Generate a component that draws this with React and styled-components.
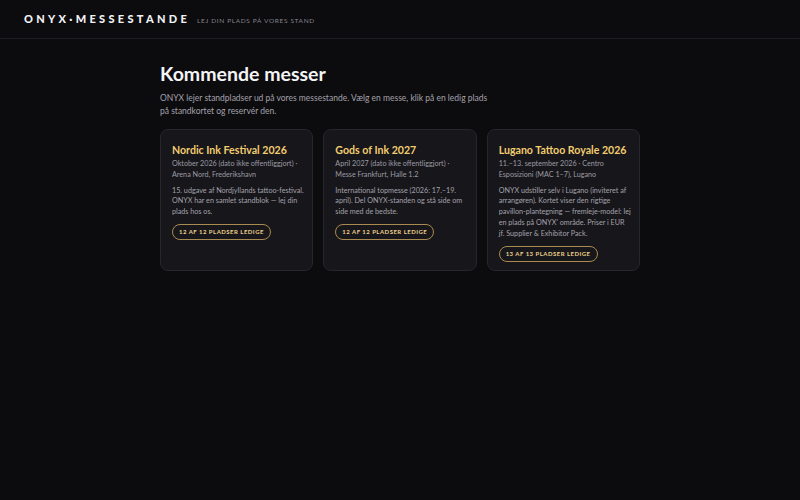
import React from "react";
import styled, { createGlobalStyle } from "styled-components";

const fairs = [
  {
    title: "Nordic Ink Festival 2026",
    meta: "Oktober 2026 (dato ikke offentliggjort) · Arena Nord, Frederikshavn",
    text: "15. udgave af Nordjyllands tattoo-festival. ONYX har en samlet standblok — lej din plads hos os.",
    free: 12,
    total: 12,
  },
  {
    title: "Gods of Ink 2027",
    meta: "April 2027 (dato ikke offentliggjort) · Messe Frankfurt, Halle 1.2",
    text: "International topmesse (2026: 17.–19. april). Del ONYX-standen og stå side om side med de bedste.",
    free: 12,
    total: 12,
  },
  {
    title: "Lugano Tattoo Royale 2026",
    meta: "11.–13. september 2026 · Centro Esposizioni (MAC 1–7), Lugano",
    text: "ONYX udstiller selv i Lugano (inviteret af arrangøren). Kortet viser den rigtige pavillon-plantegning — fremleje-model: lej en plads på ONYX' område. Priser i EUR jf. Supplier & Exhibitor Pack.",
    free: 13,
    total: 13,
  },
];

function App() {
  return (
    <>
      <GlobalStyle />
      <Header>
        <Logo>ONYX·MESSESTANDE</Logo>
        <Tagline>Lej din plads på vores stand</Tagline>
      </Header>
      <Main>
        <Title>Kommende messer</Title>
        <Intro>
          ONYX lejer standpladser ud på vores messestande. Vælg en messe, klik
          på en ledig plads på standkortet og reservér den.
        </Intro>
        <Grid>
          {fairs.map((f) => (
            <Card key={f.title}>
              <CardTitle>{f.title}</CardTitle>
              <Meta>{f.meta}</Meta>
              <Desc>{f.text}</Desc>
              <Badge>
                {f.free} af {f.total} pladser ledige
              </Badge>
            </Card>
          ))}
        </Grid>
      </Main>
    </>
  );
}

export default App;

const GlobalStyle = createGlobalStyle`
  html, body {
    margin: 0;
    background: #0c0b0e;
    color: #eeeef0;
    font-family: Lato, "Open Sans", sans-serif;
  }
  body {
    min-height: 500px;
  }
`;

const Header = styled.header`
  display: flex;
  align-items: baseline;
  gap: 7px;
  height: 39px;
  padding: 12px 24px 0;
  box-sizing: border-box;
  border-bottom: 1px solid #1e1d22;
`;

const Logo = styled.div`
  font-size: 11px;
  font-weight: 900;
  letter-spacing: 0.3em;
  color: #f1f1f3;
`;

const Tagline = styled.div`
  font-size: 6.5px;
  letter-spacing: 0.1em;
  text-transform: uppercase;
  color: #85848c;
`;

const Main = styled.main`
  width: 480px;
  margin: 0 auto;
  padding-top: 23px;
`;

const Title = styled.h1`
  margin: 0;
  font-size: 19.5px;
  font-weight: 700;
  color: #f4f4f6;
`;

const Intro = styled.p`
  max-width: 330px;
  margin: 7px 0 0;
  font-size: 8.5px;
  line-height: 13px;
  color: #a3a2aa;
`;

const Grid = styled.div`
  display: grid;
  grid-template-columns: repeat(3, 1fr);
  gap: 10px;
  margin-top: 11px;
`;

const Card = styled.div`
  display: flex;
  flex-direction: column;
  align-items: flex-start;
  padding: 14px 8px 8px 11px;
  background: #17161b;
  border: 1px solid #27262c;
  border-radius: 8px;
  min-height: 117px;
`;

const CardTitle = styled.h2`
  margin: 0;
  font-size: 10.6px;
  font-weight: 700;
  color: #f2cd70;
`;

const Meta = styled.div`
  margin-top: 3px;
  font-size: 7.2px;
  line-height: 10.8px;
  color: #9c9ba3;
`;

const Desc = styled.p`
  margin: 5px 0 0;
  font-size: 7.2px;
  line-height: 10.8px;
  color: #a3a2aa;
`;

const Badge = styled.span`
  margin-top: 6px;
  display: inline-flex;
  align-items: center;
  height: 14px;
  padding: 0 6px;
  border: 1px solid #a98a4f;
  border-radius: 999px;
  font-size: 6px;
  font-weight: 700;
  letter-spacing: 0.08em;
  text-transform: uppercase;
  color: #ecd08a;
`;
